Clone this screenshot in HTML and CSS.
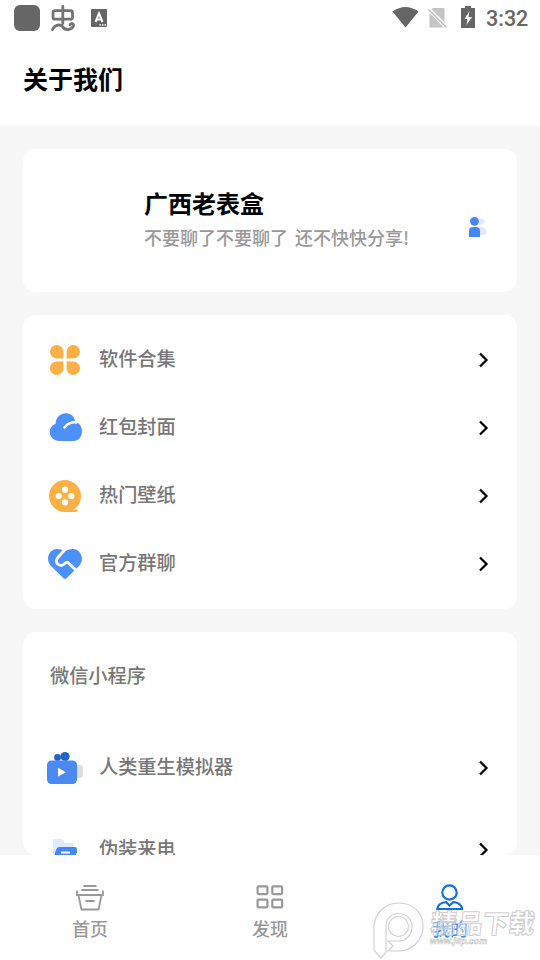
FILE: index.html
```html
<!DOCTYPE html>
<html lang="zh-CN">
<head>
<meta charset="utf-8">
<title>关于我们</title>
<link rel="stylesheet" href="styles.css">
</head>
<body>
<div class="app">
  <div class="status">
    <svg class="status-left" width="110" height="36" viewBox="0 0 110 36">
      <rect x="14" y="5" width="26" height="26" rx="6" fill="#666"/>
      <g fill="none" stroke="#747474" stroke-width="2.8" stroke-linecap="round" stroke-linejoin="round">
        <rect x="53" y="10.700" width="19.500" height="8.500" rx="2"/>
        <path d="M62.800 6.500v17M52.500 29.500c2-4.500 6-5.500 9.500-3.500 3 5.500 10.500 4 11.500-.5.300-2-3-2.500-3.500-.5"/>
      </g>
      <rect x="91" y="9" width="16" height="18" rx="1" fill="#666"/>
      <path d="M95.500 22l3.500-8.500 3.500 8.500M96.700 19.500h4.600" fill="none" stroke="#fff" stroke-width="2"/>
      <path d="M99.500 25h1.500m1 0h1.500m1 0h1.500" stroke="#fff" stroke-width="1.300"/>
    </svg>
    <svg class="status-right" width="90" height="36" viewBox="390 0 90 36">
      <path d="M392.500 11.500q13-9 26 0l-13 16z" fill="#666"/>
      <path d="M433 8h10.500q1 0 1 1v18.500h-15V12z" fill="#c4c4c4"/>
      <path d="M428 8.500l19 19.500" stroke="#fff" stroke-width="4"/>
      <path d="M428.500 9.500l18 18" stroke="#bdbdbd" stroke-width="1.600"/>
      <path d="M461 8h4V6h6v2h4v20h-14z" fill="#666"/>
      <path d="M469.500 11l-5 8h3l-1 6 5.500-8h-3.500z" fill="#fff"/>
    </svg>
    <span class="clock">3:32</span>
  </div>
  <header class="header"><h1>关于我们</h1></header>

  <main class="content">
    <section class="card profile">
      <div class="profile-text">
        <h2>广西老表盒</h2>
        <p>不要聊了不要聊了<span class="gap"> </span>还不快快分享!</p>
      </div>
      <svg width="18" height="22" viewBox="0 0 18 22">
        <g fill="#dfeafc"><circle cx="12.500" cy="5.500" r="3"/><path d="M10 11h3q4 0 4 4v4h-7z"/></g>
        <g fill="#4687f8"><circle cx="5.500" cy="5.300" r="4.400"/><path d="M0 21v-6q0-4 4-4h3q4 0 4 4v6z"/></g>
      </svg>
    </section>

    <section class="card menu">
      <div class="row">
        <svg class="icon" viewBox="0 0 36 36" fill="#fcb045">
          <path d="M9.700 3a6.700 6.700 0 0 1 6.700 6.700v6.700H9.700a6.700 6.700 0 0 1 0-13.400z"/>
          <path d="M26.300 3a6.700 6.700 0 0 1 0 13.400h-6.700V9.700A6.700 6.700 0 0 1 26.300 3zM9.700 33a6.700 6.700 0 0 1 0-13.400h6.700v6.700A6.700 6.700 0 0 1 9.700 33zM26.300 33a6.700 6.700 0 0 1-6.700-6.700v-6.700h6.700a6.700 6.700 0 0 1 0 13.400z"/>
        </svg>
        <span class="label">软件合集</span>
        <svg class="arrow" viewBox="0 0 10 16"><path d="M1 1.500L7.500 8 1 14.500"/></svg>
      </div>
      <div class="row">
        <svg class="icon" viewBox="0 0 36 36">
          <path d="M13 31C1 31-.5 17 8.500 14 9 .5 27 0 28 11.500 38 14 37 31 26.500 31z" fill="#4c91f8"/>
          <path d="M17.500 17.500q4.500-6 12-5" fill="none" stroke="#fff" stroke-width="2.500" stroke-linecap="round"/>
        </svg>
        <span class="label">红包封面</span>
        <svg class="arrow" viewBox="0 0 10 16"><path d="M1 1.500L7.500 8 1 14.500"/></svg>
      </div>
      <div class="row">
        <svg class="icon" viewBox="0 0 36 36">
          <circle cx="18" cy="18" r="16" fill="#fcb045"/>
          <path d="M18 34h11.500q1.500-.5 1-2.500H26l-8-3z" fill="#fcb045"/>
          <g fill="#fff"><circle cx="18" cy="11.700" r="3.100"/><circle cx="18" cy="24.300" r="3.100"/><circle cx="11.700" cy="18" r="3.100"/><circle cx="24.300" cy="18" r="3.100"/></g>
        </svg>
        <span class="label">热门壁纸</span>
        <svg class="arrow" viewBox="0 0 10 16"><path d="M1 1.500L7.500 8 1 14.500"/></svg>
      </div>
      <div class="row">
        <svg class="icon" viewBox="0 0 36 36">
          <path d="M16.500 32.300L4 20C-1.500 14.500 1 4.500 9 3q4-.5 9 2 5-2.500 9-2c8 1.500 10.500 11.500 5 17L19.500 32.300q-1.500 1.300-3 0z" fill="#4c91f8"/>
          <path d="M19.500 2l-8.700 9.500c-4 5.500 2.500 10.500 6.700 6.300q2.500-2.500 4.500-.3l7.500 7" fill="none" stroke="#fff" stroke-width="2.800"/>
        </svg>
        <span class="label">官方群聊</span>
        <svg class="arrow" viewBox="0 0 10 16"><path d="M1 1.500L7.500 8 1 14.500"/></svg>
      </div>
    </section>

    <section class="card programs">
      <h3>微信小程序</h3>
      <div class="row">
        <svg class="icon" viewBox="0 0 36 36">
          <rect x="27" y="15" width="9" height="13" rx="3" fill="#dedede"/>
          <circle cx="10.500" cy="7.500" r="3.400" fill="#2163c8"/><circle cx="18" cy="6.500" r="4.600" fill="#2163c8"/>
          <rect x="0" y="10.500" width="30" height="23.500" rx="4.500" fill="#4b89f5"/>
          <path d="M11 17.800l8 4.400-8 4.400z" fill="#fff"/>
        </svg>
        <span class="label">人类重生模拟器</span>
        <svg class="arrow" viewBox="0 0 10 16"><path d="M1 1.500L7.500 8 1 14.500"/></svg>
      </div>
      <div class="row">
        <svg class="icon" viewBox="0 0 36 36">
          <path d="M6 30V9q0-2 2-2h7q2 0 2 2.500 0 1.500 2 1.500h7v19z" fill="#dfebfc"/>
          <path d="M12 15h16q2 0 2 2v4h-1v13H8V21l1-3q1-3 3-3z" fill="#4687f8"/>
          <path d="M14 20.500h9" stroke="#fff" stroke-width="2"/>
        </svg>
        <span class="label">伪装来电</span>
        <svg class="arrow" viewBox="0 0 10 16"><path d="M1 1.500L7.500 8 1 14.500"/></svg>
      </div>
    </section>
  </main>

  <nav class="tabs">
    <div class="tab">
      <svg width="28" height="28" viewBox="0 0 28 28" fill="none" stroke="#999" stroke-width="1.800">
        <path d="M7.500 2h13M5.500 6h17M1 6.500V11h26V6.500M2.500 11.500l3 14h17l3-14M9.500 17h9"/>
      </svg>
      <span>首页</span>
    </div>
    <div class="tab">
      <svg width="28" height="28" viewBox="0 0 28 28" fill="none" stroke="#999" stroke-width="2.200">
        <rect x="1.600" y="2.300" width="9.800" height="7.800" rx="1"/><rect x="16.300" y="2.300" width="9.800" height="7.800" rx="1"/><rect x="1.600" y="15.600" width="9.800" height="7.800" rx="1"/><rect x="16.300" y="15.600" width="9.800" height="7.800" rx="1"/>
      </svg>
      <span>发现</span>
    </div>
    <div class="tab active">
      <svg width="28" height="28" viewBox="0 0 28 28" fill="none" stroke="#1570dc" stroke-width="2.200">
        <circle cx="13.500" cy="8.500" r="7.200"/><path d="M10 18Q2 19 1.300 25h24.800Q25.500 19 17.500 18L13.500 21.500z"/>
      </svg>
      <span>我的</span>
    </div>
    <div class="watermark">
      <svg width="52" height="58" viewBox="0 0 52 58">
        <path d="M1 48V24C2 10 13 1 26 1c14 0 24 10 24 23 0 14-11 25-24 25H15l5-5-5-5h11c8 0 13-7 13-15 0-7-6-12.500-13.500-12.500S13 17 13 24v26l-5 6z"/>
        <circle cx="25.500" cy="24.500" r="10"/>
      </svg>
      <div class="mark-text"><b>精品下载</b><i>www.j9p.com</i></div>
    </div>
  </nav>
</div>
</body>
</html>
```

FILE: styles.css
```css
* { box-sizing: border-box; }

body {
  margin: 0;
  background: #f7f7f7;
  color: #000;
  font-family: "Noto Sans CJK SC", sans-serif;
}

h1, h2, h3, p { margin: 0; }
svg { display: block; flex: none; }

.app {
  height: 960px;
  display: flex;
  flex-direction: column;
  overflow: hidden;
}

.status {
  height: 36px;
  flex: none;
  display: flex;
  align-items: center;
  background: #fff;
}
.status-right { margin-left: auto; }
.clock {
  width: 60px;
  padding: 2px 0 0 6px;
  color: #666;
  font: 500 21.5px/36px Roboto, sans-serif;
}

.header {
  height: 90px;
  flex: none;
  padding: 24px 23px 0;
  background: #fff;
}
.header h1 { font-size: 25px; line-height: 37px; font-weight: 700; }

.content {
  flex: 1;
  min-height: 0;
  padding: 23px 23px 0;
  display: flex;
  flex-direction: column;
  gap: 23px;
}

.card { background: #fff; border-radius: 13px; flex: none; }

.profile {
  height: 143px;
  padding: 12px 30px 0 121px;
  display: flex;
  align-items: center;
  justify-content: space-between;
}
.profile-text { margin-top: -18px; }
.profile h2 { font-size: 24px; line-height: 36px; font-weight: 700; }
.profile p {
  color: #999;
  font-size: 18px;
  line-height: 27px;
  font-weight: 500;
  margin-top: 3px;
  white-space: nowrap;
}
.gap { margin-right: 3px; }

.menu { height: 294px; padding: 11px 28px 0 24px; }

.row { height: 68px; display: flex; align-items: center; }
.icon { width: 36px; height: 36px; }
.label {
  flex: 1;
  margin: -3px 0 0 16px;
  color: #777;
  font-size: 19.200px;
  line-height: 29px;
  font-weight: 500;
}
.arrow {
  width: 10px;
  height: 16px;
  fill: none;
  stroke: #000;
  stroke-width: 2.200;
}

.programs {
  height: 223px;
  padding: 29px 28px 0 24px;
  overflow: hidden;
}
.programs h3 {
  padding-left: 3px;
  color: #777;
  font-size: 19.200px;
  line-height: 29px;
  font-weight: 500;
  margin-bottom: 37px;
}
.programs .row { height: 82px; }

.tabs {
  position: relative;
  height: 105px;
  flex: none;
  display: flex;
  background: #fff;
}
.tab {
  flex: 1;
  display: flex;
  flex-direction: column;
  align-items: center;
  padding-top: 29px;
  color: #999;
  font-size: 18px;
  line-height: 26px;
  font-weight: 500;
}
.tab span { margin-top: 3px; }
.active { color: #3c8ceb; }

.watermark {
  position: absolute;
  left: 373px;
  top: 47px;
  display: flex;
  width: 167px;
}
.watermark svg { fill: none; stroke: #d2d2d2; stroke-width: 1.200; }
.mark-text { padding-top: 3px; margin-left: 6px; white-space: nowrap; }
.mark-text b {
  display: block;
  font-size: 26px;
  line-height: 34px;
  font-weight: 900;
  color: rgba(255, 255, 255, .4);
  -webkit-text-stroke: 1px #cfcfcf;
  transform: skewX(-6deg);
}
.mark-text i {
  display: block;
  font: italic 700 9px/10px "Liberation Sans", sans-serif;
  color: #fff;
  -webkit-text-stroke: .5px #bbb;
  margin: -3px 0 0 -1px;
}
```
